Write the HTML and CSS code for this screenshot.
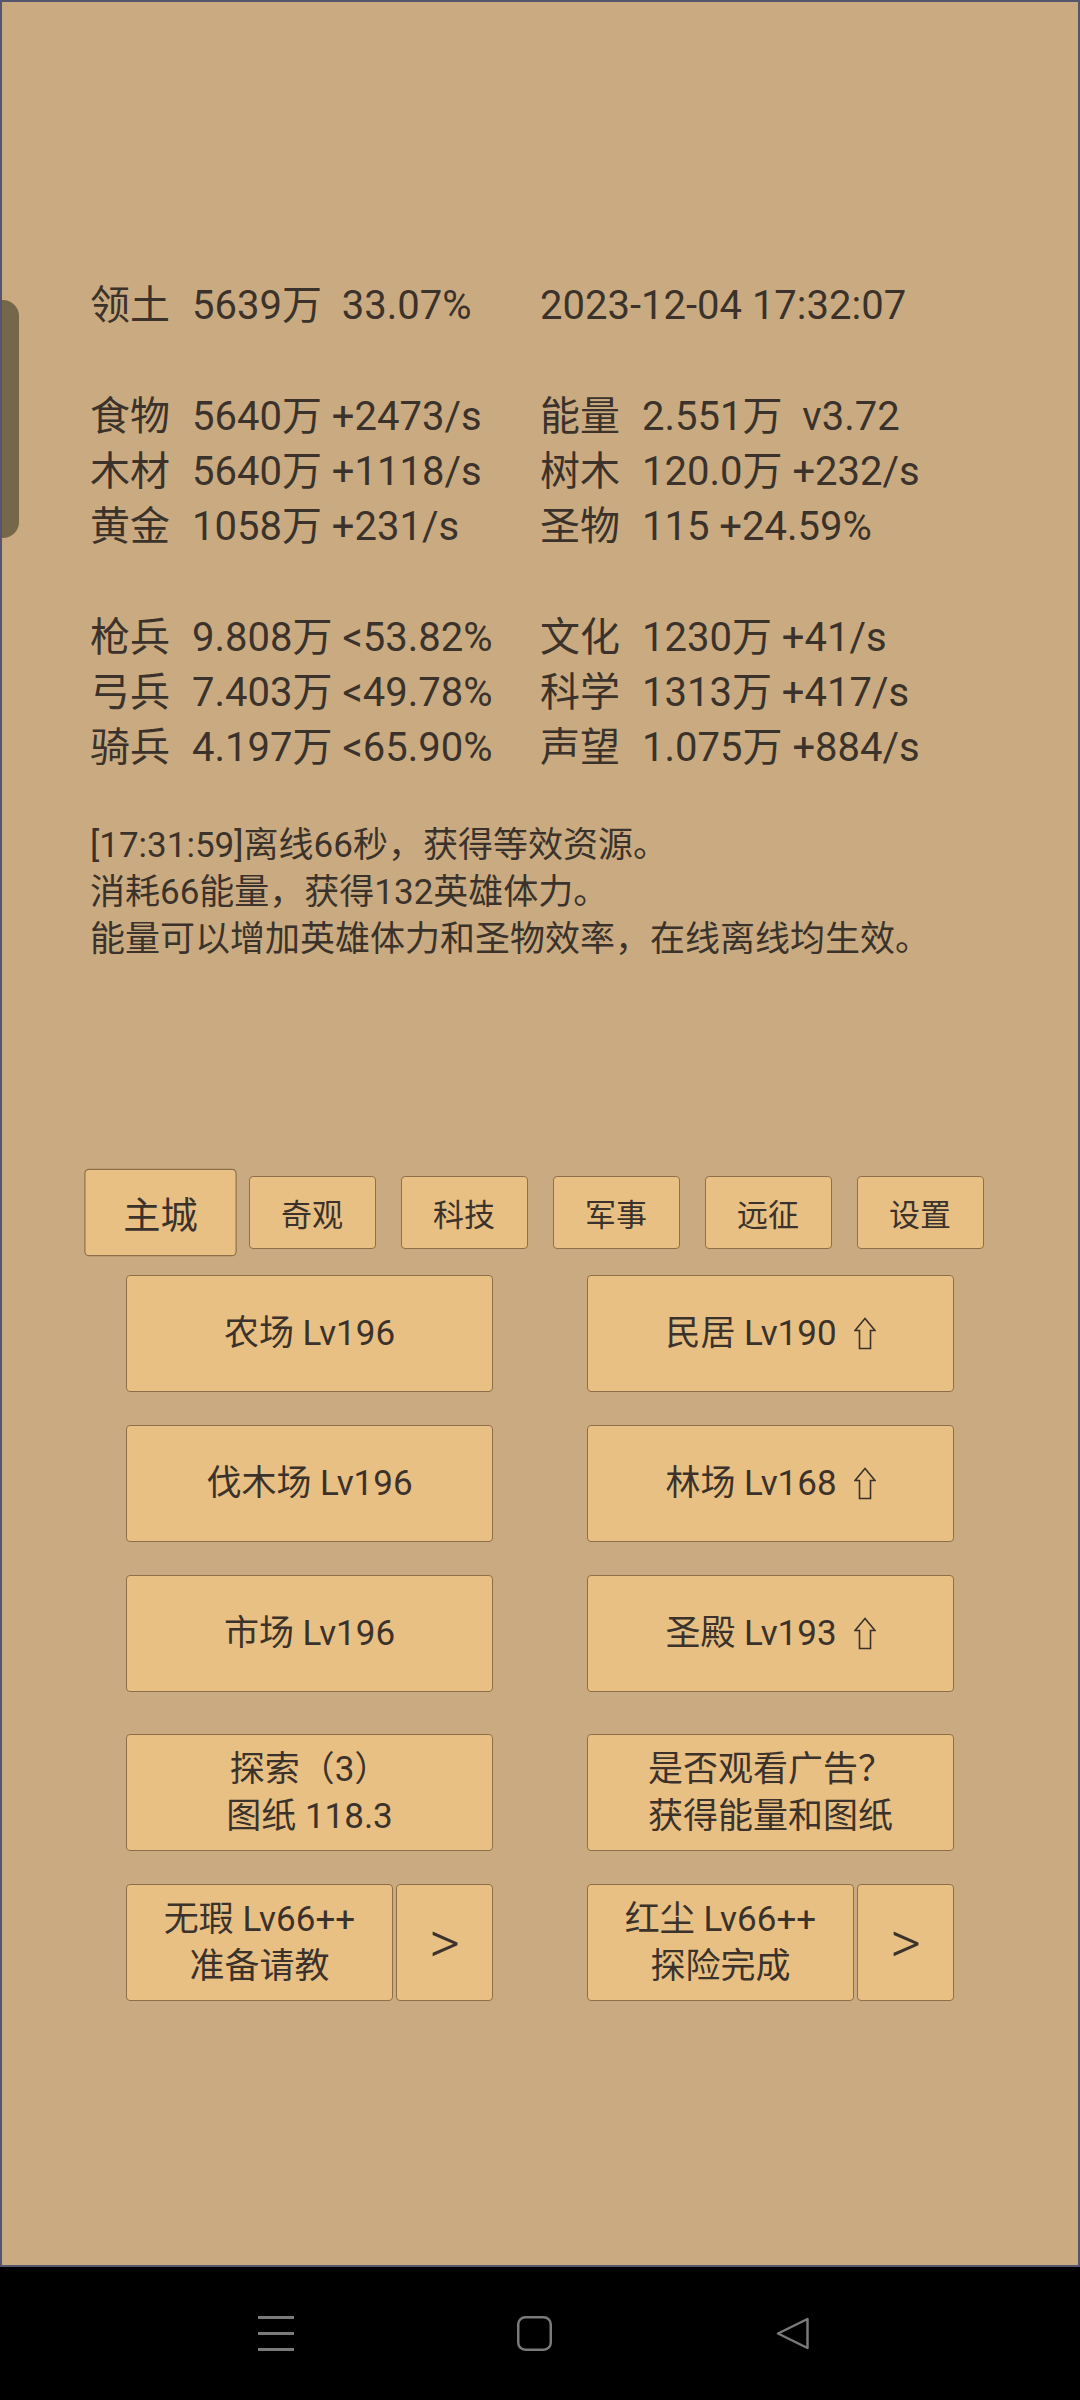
FILE: index.html
```html
<!DOCTYPE html>
<html lang="zh-CN">
<head>
<meta charset="utf-8">
<title>主城</title>
<link rel="stylesheet" href="styles.css">
</head>
<body>
<div class="app">
  <div class="handle"></div>
  <div class="stats">
    <div class="row"><div class="c1"><span class="lbl">领土</span><span class="val">5639万  33.07%</span></div><div class="c2"><span class="val">2023-12-04 17:32:07</span></div></div>
    <div class="row"></div>
    <div class="row"><div class="c1"><span class="lbl">食物</span><span class="val">5640万 +2473/s</span></div><div class="c2"><span class="lbl">能量</span><span class="val">2.551万  v3.72</span></div></div>
    <div class="row"><div class="c1"><span class="lbl">木材</span><span class="val">5640万 +1118/s</span></div><div class="c2"><span class="lbl">树木</span><span class="val">120.0万 +232/s</span></div></div>
    <div class="row"><div class="c1"><span class="lbl">黄金</span><span class="val">1058万 +231/s</span></div><div class="c2"><span class="lbl">圣物</span><span class="val">115 +24.59%</span></div></div>
    <div class="row"></div>
    <div class="row"><div class="c1"><span class="lbl">枪兵</span><span class="val">9.808万 &lt;53.82%</span></div><div class="c2"><span class="lbl">文化</span><span class="val">1230万 +41/s</span></div></div>
    <div class="row"><div class="c1"><span class="lbl">弓兵</span><span class="val">7.403万 &lt;49.78%</span></div><div class="c2"><span class="lbl">科学</span><span class="val">1313万 +417/s</span></div></div>
    <div class="row"><div class="c1"><span class="lbl">骑兵</span><span class="val">4.197万 &lt;65.90%</span></div><div class="c2"><span class="lbl">声望</span><span class="val">1.075万 +884/s</span></div></div>
  </div>
  <div class="msg">
    <div>[17:31:59]离线66秒，获得等效资源。</div>
    <div>消耗66能量，获得132英雄体力。</div>
    <div>能量可以增加英雄体力和圣物效率，在线离线均生效。</div>
  </div>
  <div class="tabs">
    <div class="tab active">主城</div>
    <div class="tab">奇观</div>
    <div class="tab">科技</div>
    <div class="tab">军事</div>
    <div class="tab">远征</div>
    <div class="tab">设置</div>
  </div>
  <div class="buildings">
    <div class="brow">
      <div class="btn">农场 Lv196</div>
      <div class="btn"><span class="inl">民居 Lv190<svg class="up" width="22" height="33" viewBox="0 0 22 33"><path d="M1 13.5 L11 1.5 L21 13.5 L16.5 13.5 L16.5 31.5 L5.5 31.5 L5.5 13.5 Z" fill="none" stroke="#3b332b" stroke-width="1.6" stroke-linejoin="miter"/></svg></span></div>
    </div>
    <div class="brow">
      <div class="btn">伐木场 Lv196</div>
      <div class="btn"><span class="inl">林场 Lv168<svg class="up" width="22" height="33" viewBox="0 0 22 33"><path d="M1 13.5 L11 1.5 L21 13.5 L16.5 13.5 L16.5 31.5 L5.5 31.5 L5.5 13.5 Z" fill="none" stroke="#3b332b" stroke-width="1.6" stroke-linejoin="miter"/></svg></span></div>
    </div>
    <div class="brow">
      <div class="btn">市场 Lv196</div>
      <div class="btn"><span class="inl">圣殿 Lv193<svg class="up" width="22" height="33" viewBox="0 0 22 33"><path d="M1 13.5 L11 1.5 L21 13.5 L16.5 13.5 L16.5 31.5 L5.5 31.5 L5.5 13.5 Z" fill="none" stroke="#3b332b" stroke-width="1.6" stroke-linejoin="miter"/></svg></span></div>
    </div>
    <div class="brow wide-gap">
      <div class="btn"><div>探索（3）</div><div>图纸 118.3</div></div>
      <div class="btn"><div>是否观看广告？</div><div>获得能量和图纸</div></div>
    </div>
    <div class="brow">
      <div class="pair">
        <div class="btn main"><div>无瑕 Lv66++</div><div>准备请教</div></div>
        <div class="btn go">&gt;</div>
      </div>
      <div class="pair">
        <div class="btn main"><div>红尘 Lv66++</div><div>探险完成</div></div>
        <div class="btn go">&gt;</div>
      </div>
    </div>
  </div>
</div>
<div class="nav">
  <svg class="nav-icon" width="36" height="35" viewBox="0 0 36 35"><path d="M0 1.5 H36 M0 17.5 H36 M0 33.5 H36" stroke="#7a7a7a" stroke-width="3"/></svg>
  <svg class="nav-icon" width="35" height="35" viewBox="0 0 35 35"><rect x="1.25" y="1.25" width="32.5" height="32.5" rx="7" fill="none" stroke="#7a7a7a" stroke-width="2.5"/></svg>
  <svg class="nav-icon" width="35" height="35" viewBox="0 0 35 35"><path d="M32.5 3 L32.5 32 L3 17.5 Z" fill="none" stroke="#7a7a7a" stroke-width="2.5" stroke-linejoin="round"/></svg>
</div>
</body>
</html>
```

FILE: styles.css
```css
html, body {
  margin: 0;
  padding: 0;
}

body {
  width: 1080px;
  height: 2400px;
  background: #000;
  font-family: Roboto, "Noto Sans CJK SC", sans-serif;
  color: #3b332b;
  overflow: hidden;
}

.app {
  position: relative;
  height: 2267px;
  box-sizing: border-box;
  border: 2px solid #55566d;
  background: #caab81;
}

.handle {
  position: absolute;
  left: 0;
  top: 298px;
  width: 17px;
  height: 238px;
  background: #75674a;
  border-radius: 0 16px 16px 0;
}

.stats {
  padding-top: 276px;
  padding-left: 88px;
  font-size: 40px;
  line-height: 55.25px;
}

.row {
  display: flex;
  height: 55.25px;
  white-space: pre;
}

.c1 {
  width: 450px;
  display: flex;
}

.c2 {
  display: flex;
}

.lbl {
  width: 102px;
}

.msg {
  margin-top: 47px;
  padding-left: 88px;
  font-size: 35px;
  line-height: 47px;
}

.tabs {
  display: flex;
  justify-content: center;
  margin-top: 213px;
}

.tab {
  width: 127px;
  height: 73px;
  margin: 0 12.5px;
  box-sizing: border-box;
  border: 1px solid #8f6f49;
  border-radius: 4px;
  background: #e9c084;
  display: flex;
  align-items: center;
  justify-content: center;
  font-size: 31px;
}

.tab.active {
  transform: scale(1.2);
}

.buildings {
  margin-top: 26px;
}

.brow {
  display: flex;
  justify-content: center;
  gap: 94px;
  margin-top: 33px;
}

.brow:first-child {
  margin-top: 0;
}

.brow.wide-gap {
  margin-top: 42px;
}

.btn {
  width: 367px;
  height: 117px;
  box-sizing: border-box;
  border: 1px solid #8f6f49;
  border-radius: 4px;
  background: #e9c084;
  display: flex;
  flex-direction: column;
  align-items: center;
  justify-content: center;
  font-size: 35px;
  line-height: 47px;
  text-align: center;
  white-space: nowrap;
}

.inl {
  display: inline-flex;
  align-items: center;
}

.up {
  margin-left: 17px;
}

.pair {
  display: flex;
  gap: 3px;
  width: 367px;
}

.pair .main {
  width: 267px;
}

.pair .go {
  width: 97px;
  font-size: 60px;
  font-weight: 300;
}

.nav {
  height: 133px;
  display: flex;
  align-items: center;
  padding-left: 258px;
  gap: 223px;
}

.nav-icon {
  display: block;
}
```
